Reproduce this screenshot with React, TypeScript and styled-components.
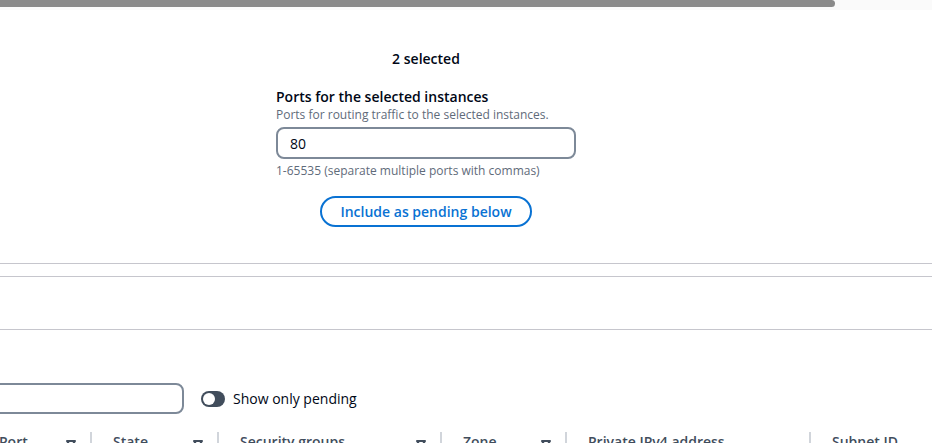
import React from "react";
import styled, { createGlobalStyle } from "styled-components";

const GlobalStyle = createGlobalStyle`
html, body {
    margin: 0;
    padding: 0;
    overflow: hidden;
    background: #ffffff;
}
body {
    font-family: "Open Sans", "Noto Sans", sans-serif;
    color: #000716;
}
`

const columns = [
    { title: "Port", width: 114, filter: true },
    { title: "State", width: 127, filter: true },
    { title: "Security groups", width: 223, filter: true },
    { title: "Zone", width: 125, filter: true },
    { title: "Private IPv4 address", width: 244, filter: false },
    { title: "Subnet ID", width: 160, filter: false },
];

const FilterIcon = () => (
    <svg width="16" height="16" viewBox="0 0 16 16" aria-hidden="true">
        <path d="M4 5h8l-4 6-4-6z" fill="none" stroke="currentColor" strokeWidth="2" strokeLinejoin="round" />
    </svg>
);

export default function App() {
    return (
        <Page>
            <GlobalStyle />
            <ScrollTrack>
                <ScrollThumb />
            </ScrollTrack>

            <FormColumn>
                <Selected>2 selected</Selected>
                <Field>
                    <Label>Ports for the selected instances</Label>
                    <Description>Ports for routing traffic to the selected instances.</Description>
                    <Input defaultValue="80" />
                    <Hint>1-65535 (separate multiple ports with commas)</Hint>
                </Field>
                <ButtonRow>
                    <OutlineButton>Include as pending below</OutlineButton>
                </ButtonRow>
            </FormColumn>

            <Rule $top={36} />
            <Rule $top={12} />
            <Rule $top={52} />

            <FilterBar>
                <SearchInput />
                <ToggleWrap>
                    <Toggle />
                    <ToggleLabel>Show only pending</ToggleLabel>
                </ToggleWrap>
            </FilterBar>

            <HeaderRow>
                {columns.map((c) => (
                    <HeaderCell key={c.title} $width={c.width}>
                        <span>{c.title}</span>
                        {c.filter && <FilterIcon />}
                    </HeaderCell>
                ))}
            </HeaderRow>
        </Page>
    );
}

const Page = styled.div`
width: 932px;
height: 443px;
overflow: hidden;
`

const ScrollTrack = styled.div`
height: 10px;
background-color: #fafafa;
`

const ScrollThumb = styled.div`
width: 835px;
height: 7px;
background-color: #8a8a8a;
border-radius: 0 4px 4px 0;
`

const FormColumn = styled.div`
width: 300px;
margin-left: 276px;
padding-top: 39px;
display: flex;
flex-direction: column;
`

const Selected = styled.div`
text-align: center;
font-size: 14px;
font-weight: 600;
line-height: 20px;
margin-bottom: 19px;
`

const Field = styled.div`
display: flex;
flex-direction: column;
`

const Label = styled.div`
font-size: 14px;
font-weight: 600;
line-height: 18px;
`

const Description = styled.div`
font-size: 12px;
line-height: 16px;
color: #5f6b7a;
margin-top: 1px;
`

const Input = styled.input`
box-sizing: border-box;
width: 300px;
height: 32px;
margin-top: 4px;
padding: 0 12px;
border: 2px solid #7d8998;
border-radius: 8px;
font-family: inherit;
font-size: 14px;
color: #000716;
outline: none;
`

const Hint = styled.div`
font-size: 12px;
line-height: 16px;
color: #5f6b7a;
margin-top: 4px;
`

const ButtonRow = styled.div`
display: flex;
justify-content: center;
margin-top: 17px;
`

const OutlineButton = styled.button`
box-sizing: border-box;
width: 212px;
height: 31px;
border: 2px solid #0972d3;
border-radius: 20px;
background: #ffffff;
color: #0972d3;
font-family: inherit;
font-size: 14px;
font-weight: 600;
`

const Rule = styled.div<{ $top: number }>`
height: 1px;
background-color: #c6c6cd;
margin-top: ${(p) => p.$top}px;
`

const FilterBar = styled.div`
display: flex;
align-items: center;
gap: 17px;
margin-top: 53px;
margin-left: -116px;
`

const SearchInput = styled.input`
box-sizing: border-box;
width: 300px;
height: 31px;
border: 2px solid #7d8998;
border-radius: 8px;
outline: none;
`

const ToggleWrap = styled.label`
display: flex;
align-items: center;
gap: 8px;
`

const Toggle = styled.span`
position: relative;
width: 24px;
height: 16px;
border-radius: 8px;
background-color: #414d5c;

&::before {
    content: "";
    position: absolute;
    left: 2px;
    top: 2px;
    width: 12px;
    height: 12px;
    border-radius: 50%;
    background-color: #ffffff;
}
`

const ToggleLabel = styled.span`
font-size: 14px;
line-height: 20px;
color: #000716;
`

const HeaderRow = styled.div`
display: flex;
margin-top: 18px;
margin-left: -22px;
`

const HeaderCell = styled.div<{ $width: number }>`
box-sizing: border-box;
flex: 0 0 ${(p) => p.$width}px;
display: flex;
justify-content: space-between;
align-items: flex-start;
padding: 1px 11px 0 21px;
border-right: 2px solid #d1d5db;
font-size: 14px;
font-weight: 600;
line-height: 18px;
color: #414d5c;
height: 24px;

svg {
    flex: 0 0 auto;
    color: #414d5c;
    margin-top: 3px;
}
`
